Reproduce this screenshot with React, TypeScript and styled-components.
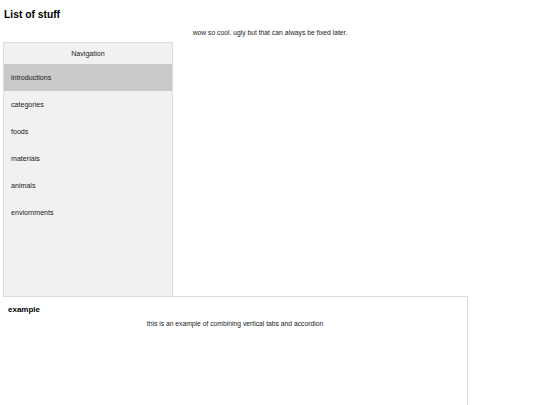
import { useState } from "react";
import styled, { createGlobalStyle } from "styled-components";

const GlobalStyle = createGlobalStyle`
  html, body {
    margin: 0;
    padding: 0;
    background: #ffffff;
  }
  body {
    font-family: "Liberation Sans", Arial, Helvetica, sans-serif;
    font-size: 6.75px;
    color: #111;
  }
`;

const Page = styled.div`
  width: 540px;
  padding: 8px 0 0 0;
  box-sizing: border-box;
`;

const Title = styled.h2`
  margin: 0 0 0 4px;
  font-size: 10.3px;
  line-height: 13px;
  font-weight: bold;
  color: #000;
`;

const Tagline = styled.p`
  margin: 8px 0 5px 0;
  line-height: 8px;
  text-align: center;
  color: #222;
`;

const Workspace = styled.div`
  padding: 0 3px;
`;

const Nav = styled.div`
  width: 170px;
  height: 255px;
  box-sizing: border-box;
  border: 1px solid #dcdcdc;
  background: #f1f1f1;
  display: flex;
  flex-direction: column;
`;

const NavHeader = styled.div`
  height: 21px;
  display: flex;
  align-items: center;
  justify-content: center;
  font-size: 7.1px;
  color: #222;
`;

const NavItem = styled.button<{ $active: boolean }>`
  height: 27px;
  width: 100%;
  border: none;
  padding: 0 0 0 7px;
  margin: 0;
  text-align: left;
  font-family: inherit;
  font-size: 7.1px;
  color: #1a1a1a;
  cursor: pointer;
  background: ${(p) => (p.$active ? "#cacaca" : "transparent")};
`;

const Panel = styled.div`
  width: 465px;
  height: 120px;
  box-sizing: border-box;
  margin-top: -1px;
  border-top: 1px solid #dcdcdc;
  border-right: 1px solid #dcdcdc;
  padding: 0 5px;
`;

const PanelTitle = styled.h4`
  margin: 0;
  padding-top: 8px;
  font-size: 8px;
  line-height: 9px;
  font-weight: bold;
  color: #000;
`;

const PanelText = styled.p`
  margin: 6px 0 0 0;
  line-height: 8px;
  text-align: center;
  color: #222;
`;

const tabs = [
  "introductions",
  "categories",
  "foods",
  "materials",
  "animals",
  "enviornments",
];

export default function App() {
  const [active, setActive] = useState(0);
  return (
    <Page>
      <GlobalStyle />
      <Title>List of stuff</Title>
      <Tagline>wow so cool. ugly but that can always be fixed later.</Tagline>
      <Workspace>
        <Nav>
          <NavHeader>Navigation</NavHeader>
          {tabs.map((t, i) => (
            <NavItem key={t} $active={i === active} onClick={() => setActive(i)}>
              {t}
            </NavItem>
          ))}
        </Nav>
        <Panel>
          <PanelTitle>example</PanelTitle>
          <PanelText>this is an example of combining vertical tabs and accordion</PanelText>
        </Panel>
      </Workspace>
    </Page>
  );
}
